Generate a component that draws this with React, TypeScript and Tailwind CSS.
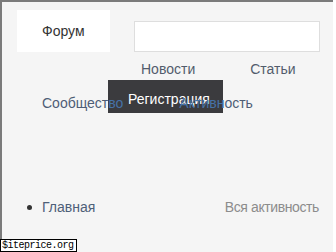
import React from "react";

export default function App() {
  const font = { fontFamily: '"Liberation Sans", Arial, sans-serif' };
  return (
    <div className="relative w-[336px] h-[252px] overflow-hidden bg-white" style={font}>
      <div className="relative w-[333px] h-[252px] bg-[#f5f5f5] border-t-2 border-l-2 border-[#7b7b7b]">
        {/* Row 1 */}
        <div className="flex items-start pt-[8px]">
          <div className="ml-[15px] w-[93px] h-[42px] bg-white flex items-center pl-[25px] text-[14px] text-[#333]">
            Форум
          </div>
          <div className="ml-[24px] mt-[11px] w-[186px] h-[31px] bg-white border border-[#dedede]" />
        </div>
        {/* Row 2 */}
        <div className="flex items-center h-[17px] mt-[9px] text-[14px] text-[#525c6c]">
          <span className="ml-[139px]">Новости</span>
          <span className="ml-[55px]">Статьи</span>
        </div>
        {/* Row 3 */}
        <div className="relative h-[33px] mt-[2px]">
          <div className="absolute left-[106px] top-0 w-[115px] h-[33px] bg-[#3b3b3e]" />
          <div className="absolute left-[126px] top-[11px] text-[14px] leading-[17px] text-white">Регистрация</div>
          <div className="absolute left-[40px] top-[15px] text-[14px] leading-[17px] text-[#4e5d75] flex">
            <span>Сообщест</span>
            <span className="text-[#4672a6]">во</span>
            <span className="ml-[56px] text-[#4672a6]">Активн</span>
            <span>ость</span>
          </div>
        </div>
        {/* Bottom row */}
        <div className="flex items-center mt-[86px] h-[17px] text-[14px]">
          <span className="ml-[25px] w-[5px] h-[5px] rounded-full bg-[#333]" />
          <span className="ml-[10px] text-[#4e6079]">Главная</span>
          <span className="ml-auto mr-[14px] text-[#8c8c8c] tracking-[-0.4px]">Вся активность</span>
        </div>
      </div>
      <div className="absolute left-0 top-[239px] h-[13px] w-[77px] bg-white border border-black flex items-center pl-[1px] text-[10px] leading-none tracking-[-0.5px] text-black" style={{ fontFamily: '"Liberation Mono", monospace' }}>
        $iteprice.org
      </div>
    </div>
  );
}
